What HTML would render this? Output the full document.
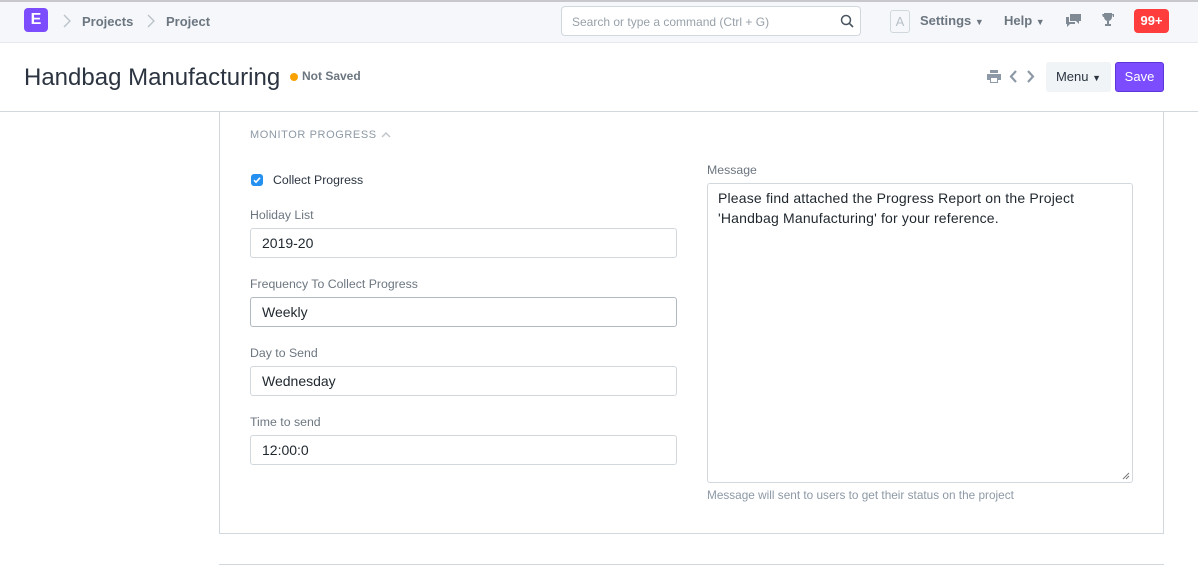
<!DOCTYPE html>
<html><head><meta charset="utf-8"><style>
*{box-sizing:border-box;margin:0;padding:0}
body{width:1198px;height:566px;overflow:hidden;background:#fff;font-family:"Liberation Sans",sans-serif;color:#1f272e;position:relative}
.nav{position:absolute;left:0;top:0;width:1198px;height:43px;background:#f5f7fa;border-top:2px solid #c8c8cc;border-bottom:1px solid #e5e8ec}
.abs{position:absolute}
.logo{left:24px;top:6px;width:24px;height:24px;background:#7c4dff;border-radius:4px;color:#fff;font-weight:bold;font-size:16px;text-align:center;line-height:24px}
.crumb{font-size:13px;font-weight:bold;color:#6c7680}
.navr{font-size:13px;font-weight:bold;color:#6c7680;top:13px}
.badge{left:1134px;width:35px;height:24px;background:#ff3d3d;color:#fff;border-radius:4px;font-weight:bold;font-size:13px;text-align:center;line-height:24px}
.head{position:absolute;left:0;top:43px;width:1198px;height:69px;border-bottom:1px solid #d1d8dd}
.card{left:219px;top:111px;width:945px;height:423px;border:1px solid #d1d8dd;border-top:none}
.lbl{font-size:12.3px;color:#6c7680}
.inp{position:absolute;width:427px;height:30px;border:1px solid #d1d8dd;border-radius:3px;font-size:14px;padding:6px 11px;color:#1f272e;background:#fff}
</style></head><body>
<div class="nav">
<div class="abs logo">E</div>
<svg class="abs" style="left:63px;top:12px" width="8" height="14" viewBox="0 0 8 14"><path d="M1 1l6 6-6 6" fill="none" stroke="#b8c0c8" stroke-width="1.3"/></svg>
<div class="abs crumb" style="left:82px;top:12px">Projects</div>
<svg class="abs" style="left:147px;top:12px" width="8" height="14" viewBox="0 0 8 14"><path d="M1 1l6 6-6 6" fill="none" stroke="#b8c0c8" stroke-width="1.3"/></svg>
<div class="abs crumb" style="left:166px;top:12px">Project</div>
<div class="abs" style="left:561px;top:4px;width:300px;height:30px;background:#fff;border:1px solid #d1d8dd;border-radius:4px;font-size:12px;color:#98a1a9;padding:8px 10px">Search or type a command (Ctrl + G)
<svg style="position:absolute;right:6px;top:7px" width="14" height="14" viewBox="0 0 14 14"><circle cx="6" cy="6" r="4.5" fill="none" stroke="#4a5560" stroke-width="1.5"/><path d="M9.3 9.3L13 13" stroke="#4a5560" stroke-width="1.6"/></svg></div>
<div class="abs" style="left:890px;top:8px;width:20px;height:23px;border:1px solid #d1d8dd;border-radius:3px;color:#b8c0c8;font-size:13px;text-align:center;line-height:21px">A</div>
<div class="abs navr" style="left:920px;top:11px">Settings <span style="font-size:9px">&#9660;</span></div>
<div class="abs navr" style="left:1004px;top:11px">Help <span style="font-size:9px">&#9660;</span></div>
<svg class="abs" style="left:1065px;top:11px" width="17" height="14" viewBox="0 0 17 14"><path d="M5 1h11v7h-2v3l-3-3H5z" fill="#7f8a95"/><path d="M1 4h3v5h6v2H5l-3 3v-3H1z" fill="#7f8a95"/></svg>
<svg class="abs" style="left:1101px;top:10px" width="14" height="15" viewBox="0 0 14 15"><path d="M3 1h8v4a4 4 0 0 1-8 0z M1 2h2v3H2z M11 2h2v3h-1z M6 9h2v3h2v2H4v-2h2z" fill="#7f8a95"/></svg>
<div class="abs badge" style="top:7px">99+</div>
</div>
<div class="head">
<div class="abs" style="left:24px;top:21px;font-size:24px;color:#2b3440">Handbag Manufacturing</div>
<div class="abs" style="left:290px;top:30px;width:8px;height:8px;border-radius:50%;background:#f8a100"></div>
<div class="abs" style="left:302px;top:26px;font-size:12px;font-weight:bold;color:#6c7680">Not Saved</div>
<svg class="abs" style="left:987px;top:27px" width="14" height="13" viewBox="0 0 14 13"><path d="M3 0h8v3H3z M0 4h14v6h-3v3H3v-3H0z" fill="#8d99a6"/><rect x="4" y="8" width="6" height="4" fill="#fff"/></svg>
<svg class="abs" style="left:1009px;top:27px" width="26" height="13" viewBox="0 0 26 13"><path d="M7 1L2 6.5 7 12 M19 1l5 5.5L19 12" fill="none" stroke="#8d99a6" stroke-width="2.2"/></svg>
<div class="abs" style="left:1046px;top:19px;width:65px;height:30px;background:#f0f4f7;border-radius:3px;font-size:13px;color:#2b3440;line-height:30px;text-align:center">Menu <span style="font-size:9px">&#9660;</span></div>
<div class="abs" style="left:1115px;top:19px;width:49px;height:30px;background:#7c4dff;border:1px solid #5e35d9;border-radius:3px;font-size:13px;color:#fff;line-height:28px;text-align:center">Save</div>
</div>
<div class="abs card"></div>
<div class="abs" style="left:219px;top:564px;width:945px;height:3px;border-top:1px solid #d1d8dd"></div>
<div class="abs" style="left:250px;top:129px;font-size:11px;color:#8d99a6;letter-spacing:.6px">MONITOR PROGRESS</div>
<svg class="abs" style="left:381px;top:131px" width="10" height="7" viewBox="0 0 10 7"><path d="M1 6l4-4 4 4" fill="none" stroke="#c0c6cc" stroke-width="1.5"/></svg>
<div class="abs" style="left:251px;top:174px;width:12px;height:12px;background:#2490ef;border-radius:3px"><svg width="12" height="12" viewBox="0 0 12 12" style="display:block"><path d="M3 6.2l2 2 4-4.4" fill="none" stroke="#fff" stroke-width="1.6"/></svg></div>
<div class="abs" style="left:273px;top:173px;font-size:12.3px;color:#2b3440">Collect Progress</div>
<div class="abs lbl" style="left:250px;top:208px">Holiday List</div>
<div class="inp" style="left:250px;top:228px">2019-20</div>
<div class="abs lbl" style="left:250px;top:277px">Frequency To Collect Progress</div>
<div class="inp" style="left:250px;top:297px;border-color:#b0b8c0">Weekly</div>
<div class="abs lbl" style="left:250px;top:346px">Day to Send</div>
<div class="inp" style="left:250px;top:366px">Wednesday</div>
<div class="abs lbl" style="left:250px;top:415px">Time to send</div>
<div class="inp" style="left:250px;top:435px">12:00:0</div>
<div class="abs lbl" style="left:707px;top:163px">Message</div>
<div class="inp" style="left:707px;top:183px;width:426px;height:300px;line-height:20px;padding:4px 10px;letter-spacing:.18px">Please find attached the Progress Report on the Project 'Handbag Manufacturing' for your reference.
<svg style="position:absolute;right:2px;bottom:2px" width="8" height="8" viewBox="0 0 8 8"><path d="M7 1L1 7M7 4L4 7" stroke="#777" stroke-width="1"/></svg></div>
<div class="abs" style="left:707px;top:488px;font-size:11.8px;color:#8d99a6">Message will sent to users to get their status on the project</div>
</body></html>
